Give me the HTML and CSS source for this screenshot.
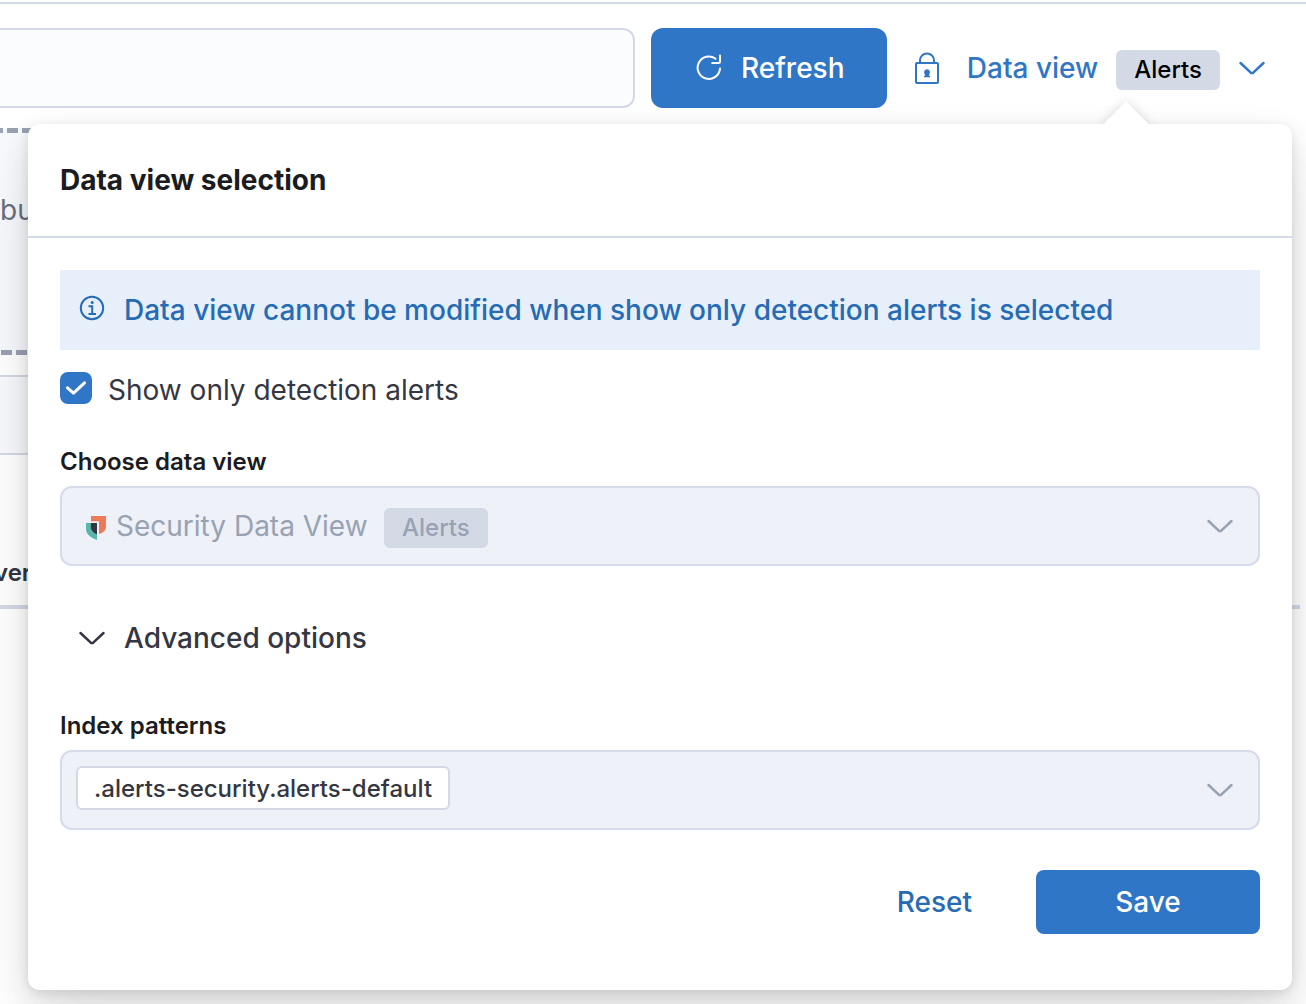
FILE: index.html
```html
<!DOCTYPE html>
<html lang="en">
<head>
<meta charset="utf-8">
<meta name="viewport" content="width=device-width, initial-scale=1">
<title>Data view selection</title>
<link rel="stylesheet" href="styles.css">
</head>
<body>
<div class="page">
  <header class="query-bar">
    <input class="query-input" type="text" aria-label="Search">
    <button class="btn btn-refresh" type="button">
      <svg class="icon" viewBox="0 0 32 32" aria-hidden="true" fill="none" stroke="currentColor" stroke-width="2" stroke-linecap="round" stroke-linejoin="round"><path d="M22.500 6.700A11.200 11.200 0 1 0 27 16.600M27 3.500V9.500Q27 11 25.500 11H19.200"/></svg>
      Refresh
    </button>
    <div class="picker">
      <button class="picker-trigger" type="button" aria-expanded="true">
        <svg class="icon" viewBox="0 0 32 32" aria-hidden="true" fill="none" stroke="currentColor" stroke-width="2"><rect x="5" y="11" width="22" height="20" rx="1"/><path d="M9 11V8a7 6.500 0 0 1 14 0V11"/><path d="M16 17.200a3 3 0 0 1 2.200 5V24H19v1.200H13V24h.8v-1.800A3 3 0 0 1 16 17.200z" fill="currentColor" stroke="none"/></svg>
        <span class="picker-text">Data view</span>
        <span class="badge">Alerts</span>
        <svg class="icon" viewBox="0 0 32 32" aria-hidden="true"><path d="M4.500 11 14.500 20.400Q16 21.600 17.500 20.400L27.500 11" fill="none" stroke="currentColor" stroke-width="2.500" stroke-linecap="round"/></svg>
      </button>
      <section class="popover" role="dialog" aria-labelledby="popover-title">
        <h2 class="popover-title" id="popover-title">Data view selection</h2>
        <form class="popover-body">
          <p class="callout">
            <svg class="icon" viewBox="0 0 32 32" aria-hidden="true" fill="none" stroke="currentColor" stroke-width="2"><circle cx="16" cy="16" r="11.200"/><path d="M12.500 14.200H16.200V22M12.500 22H20"/><circle cx="16.200" cy="10.500" r="1.500" fill="currentColor" stroke="none"/></svg>
            Data view cannot be modified when show only detection alerts is selected
          </p>
          <div class="check-row">
            <span class="check">
              <input class="check-input" type="checkbox" id="only-alerts" checked>
              <svg class="check-mark" viewBox="0 0 32 32" aria-hidden="true"><path d="M7.500 15.800 13.500 21.200 24.500 10.800" fill="none" stroke="#fff" stroke-width="3" stroke-linecap="round" stroke-linejoin="round"/></svg>
            </span>
            <label for="only-alerts">Show only detection alerts</label>
          </div>
          <label class="field-label" for="data-view">Choose data view</label>
          <div class="field">
            <svg class="logo" viewBox="0 0 20 24" aria-hidden="true"><path d="M5 0H20V10.500C20 14 17.500 17 13 18V5.200H5z" fill="#ed7b56"/><path d="M0 7H4.800V11C4.800 14.500 7.500 17 11 18.500V24C4.500 21.500 0 18 0 13z" fill="#56b8ad"/><path d="M4.800 7H11V18.500C7.500 17 4.800 14.500 4.800 11z" fill="#343741"/></svg>
            <select class="field-select" id="data-view" disabled><option>Security Data View</option></select>
            <span class="badge badge-muted">Alerts</span>
            <svg class="icon field-chevron" viewBox="0 0 32 32" aria-hidden="true"><path d="M4.500 11 14.500 20.400Q16 21.600 17.500 20.400L27.500 11" fill="none" stroke="currentColor" stroke-width="2.500" stroke-linecap="round"/></svg>
          </div>
          <button class="advanced" type="button" aria-expanded="true">
            <svg class="icon" viewBox="0 0 32 32" aria-hidden="true"><path d="M4.500 11 14.500 20.400Q16 21.600 17.500 20.400L27.500 11" fill="none" stroke="currentColor" stroke-width="2.500" stroke-linecap="round"/></svg>
            Advanced options
          </button>
          <label class="field-label" for="patterns">Index patterns</label>
          <div class="field field-combo">
            <span class="pill">.alerts-security.alerts-default</span>
            <input class="combo-input" id="patterns" type="text" disabled>
            <svg class="icon field-chevron" viewBox="0 0 32 32" aria-hidden="true"><path d="M4.500 11 14.500 20.400Q16 21.600 17.500 20.400L27.500 11" fill="none" stroke="currentColor" stroke-width="2.500" stroke-linecap="round"/></svg>
          </div>
          <div class="actions">
            <button class="btn-link" type="button">Reset</button>
            <button class="btn btn-save" type="submit">Save</button>
          </div>
        </form>
      </section>
    </div>
  </header>
  <main class="content">
    <div class="drop-zone">bu</div>
    <div class="timeline-filter"></div>
    <div class="table-head"><span class="table-title">ver</span></div>
  </main>
</div>
</body>
</html>
```

FILE: styles.css
```css
* { box-sizing: border-box; }

body {
  margin: 0;
  background: #fff;
  color: #343741;
  font: 400 28px/40px Inter, "Open Sans", sans-serif;
}

button, input, select { font: inherit; color: inherit; }
button { border: 0; background: none; padding: 0; }

.page {
  min-height: 100vh;
  padding-top: 2px;
  overflow: hidden;
}

.icon { width: 32px; height: 32px; flex: none; }

.query-bar {
  position: relative;
  z-index: 1;
  display: flex;
  align-items: center;
  gap: 16px;
  padding: 24px 38px 0 0;
  border-top: 2px solid #d3dae6;
}

.query-input {
  flex: 1;
  min-width: 0;
  height: 80px;
  border: 2px solid #d3dae6;
  border-left: 0;
  border-radius: 0 12px 12px 0;
  background: #fbfcfe;
}

.btn {
  display: flex;
  align-items: center;
  justify-content: center;
  gap: 16px;
  background: #2f76c7;
  color: #fff;
  font-weight: 500;
}
.btn-refresh { width: 236px; height: 80px; border-radius: 12px; }
.btn-save { width: 224px; height: 64px; border-radius: 8px; }

.picker { padding-left: 8px; }
.picker-trigger {
  display: flex;
  align-items: center;
  color: #2f76c7;
  font-weight: 500;
}
.picker-text { padding: 0 18px 0 24px; }
.picker-trigger .badge { margin-right: 16px; }

.badge {
  margin-top: 4px;
  padding: 0 18px;
  border-radius: 6px;
  background: #d3dae6;
  color: #000;
  font-size: 24px;
  font-weight: 500;
}
.badge-muted { color: #98a2b3; }

.popover {
  position: absolute;
  top: 120px;
  left: 28px;
  right: 14px;
  border-radius: 12px;
  background: #fff;
  box-shadow:
    0 2px 10px rgba(0, 0, 0, .08),
    0 8px 26px rgba(0, 0, 0, .08),
    0 16px 46px rgba(0, 0, 0, .07),
    0 46px 70px rgba(0, 0, 0, .05);
}
.popover::before {
  content: "";
  position: absolute;
  top: -16px;
  right: 150px;
  width: 32px;
  height: 32px;
  background: #fff;
  box-shadow: 0 0 12px rgba(0, 0, 0, .15);
  clip-path: polygon(-20px -20px, 52px -20px, -20px 52px);
  transform: rotate(45deg);
}

.popover-title {
  margin: 0;
  padding: 36px 32px;
  border-bottom: 2px solid #d3dae6;
  color: #1a1c21;
  font-size: 28px;
  font-weight: 700;
}
.popover-body { padding: 32px 32px 56px; }

.callout {
  display: flex;
  align-items: center;
  gap: 16px;
  margin: 0 0 20px;
  padding: 20px 16px;
  background: #e7f0fa;
  color: #266bb4;
  font-weight: 500;
}
.callout .icon { margin-bottom: 4px; }

.check-row { display: flex; align-items: center; gap: 16px; }
.check { display: grid; flex: none; margin-bottom: 4px; }
.check-input, .check-mark { grid-area: 1 / 1; width: 32px; height: 32px; }
.check-input {
  appearance: none;
  margin: 0;
  border-radius: 8px;
  background: #2f76c7;
}
.check-mark { position: relative; pointer-events: none; }

.field-label {
  display: block;
  margin: 32px 0 4px;
  color: #1a1c21;
  font-size: 24px;
  font-weight: 600;
}

.field {
  display: flex;
  align-items: center;
  height: 80px;
  padding: 0 22px 0 24px;
  border: 2px solid #d6dbeb;
  border-radius: 12px;
  background: #eef1f7;
  color: #98a2b3;
}
.field-combo { padding-left: 14px; }
.field-chevron { margin-left: auto; }
.logo { width: 20px; height: 24px; margin: 4px 10px 0 0; }
.field-select {
  appearance: none;
  margin-right: 16px;
  padding: 0;
  border: 0;
  background: none;
  opacity: 1;
}

.advanced {
  display: flex;
  align-items: center;
  gap: 16px;
  margin-top: 52px;
  padding-left: 16px;
  font-weight: 500;
}
.advanced + .field-label { margin-top: 48px; }

.pill {
  margin-bottom: 4px;
  padding: 2px 16px 0;
  border: 2px solid #d3dae6;
  border-radius: 6px;
  background: #fff;
  color: #343741;
  font-size: 24px;
  line-height: 38px;
  font-weight: 500;
}
.combo-input {
  flex: 1;
  min-width: 0;
  border: 0;
  background: none;
}

.actions {
  display: flex;
  align-items: center;
  justify-content: flex-end;
  gap: 64px;
  margin-top: 40px;
}
.btn-link { color: #266bb4; font-weight: 500; }

.content { padding-top: 20px; }
.drop-zone {
  height: 227px;
  margin-right: 36px;
  padding-top: 62px;
  background:
    repeating-linear-gradient(90deg, #98a2b3 0 3px, transparent 3px 7px, #98a2b3 7px 15px) 0 0 / 15px 5px repeat-x,
    repeating-linear-gradient(90deg, transparent 0 1px, #98a2b3 1px 12px, transparent 12px 15px) 0 100% / 15px 5px repeat-x,
    #f7f9fc;
  color: #69707d;
}
.timeline-filter {
  height: 80px;
  margin: 20px 36px 0 0;
  border: 2px solid #d3dae6;
  border-width: 2px 0;
  background: #f7f9fc;
}
.table-head {
  margin-right: 6px;
  padding: 98px 0 12px;
  border-bottom: 4px solid #d3dae6;
  font-size: 24px;
  font-weight: 600;
}
.table-title { margin-left: -6px; }
```
